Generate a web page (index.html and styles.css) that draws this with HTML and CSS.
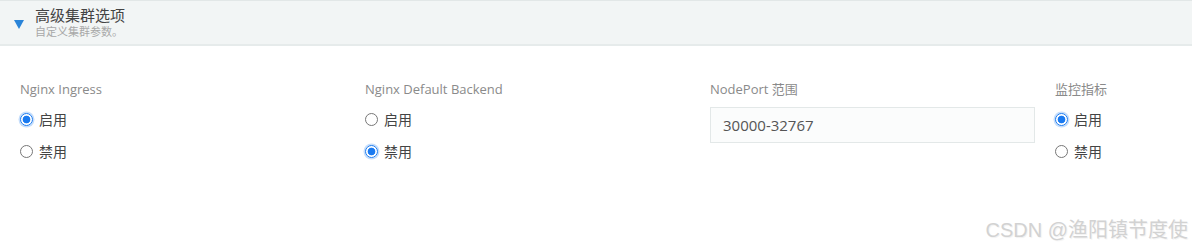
FILE: index.html
```html
<!DOCTYPE html>
<html>
<head>
  <title>高级集群选项</title>
  <link rel="stylesheet" href="styles.css">
</head>
<body>

<!-- Section header -->
<div class="section-head">
  <span class="caret"></span>
  <div>
    <div class="section-title">高级集群选项</div>
    <div class="section-desc">自定义集群参数。</div>
  </div>
</div>

<!-- Option columns -->
<div class="options">
  <div class="field">
    <div class="label">Nginx Ingress</div>
    <div class="radio checked"><span class="dot"></span>启用</div>
    <div class="radio"><span class="dot"></span>禁用</div>
  </div>

  <div class="field">
    <div class="label">Nginx Default Backend</div>
    <div class="radio"><span class="dot"></span>启用</div>
    <div class="radio checked"><span class="dot"></span>禁用</div>
  </div>

  <div class="field">
    <div class="label">NodePort 范围</div>
    <input class="text-input" type="text" value="30000-32767">
  </div>

  <div class="field">
    <div class="label">监控指标</div>
    <div class="radio checked"><span class="dot"></span>启用</div>
    <div class="radio"><span class="dot"></span>禁用</div>
  </div>
</div>

<div class="watermark">CSDN @渔阳镇节度使</div>

</body>
</html>
```

FILE: styles.css
```css
body {
  margin: 0;
  font-family: 'Open Sans', 'Noto Sans CJK SC', sans-serif;
  background-color: #FFF;
  color: #444;
  position: relative;
  height: 249px;
  overflow: hidden;
}
.section-head {
  display: flex;
  align-items: center;
  height: 46px;
  padding-left: 14px;
  background-color: #F2F5F5;
  border-top: 1px solid #E2E7E7;
  border-bottom: 2px solid #E6EBEB;
  box-sizing: border-box;
}
.caret {
  width: 0;
  height: 0;
  border-left: 5.5px solid transparent;
  border-right: 5.5px solid transparent;
  border-top: 9px solid #2A84D8;
  margin-right: 11px;
  margin-top: 3px;
}
.section-title {
  font-size: 15px;
  line-height: 19px;
  color: #444;
}
.section-desc {
  font-size: 11px;
  line-height: 14px;
  color: #A8A8A8;
}
.options {
  display: grid;
  grid-template-columns: 345px 345px 345px 1fr;
  padding: 33px 0 0 20px;
}
.label {
  font-size: 13px;
  line-height: 20px;
  color: #8A8A8A;
  margin-bottom: 4px;
}
.radio {
  display: flex;
  align-items: center;
  height: 32px;
  font-size: 14px;
  color: #444;
}
.dot {
  width: 11px;
  height: 11px;
  border: 1px solid #777;
  border-radius: 50%;
  margin-right: 6px;
  box-sizing: content-box;
  background-color: #FFF;
}
.radio.checked .dot {
  border-color: #1A7AF0;
  background: radial-gradient(circle, #1A7AF0 0, #1A7AF0 3.5px, #FFF 4.2px);
  box-shadow: 0 0 0 1.5px rgba(26, 122, 240, 0.25);
}
.text-input {
  width: 325px;
  height: 36px;
  margin-top: 4px;
  padding: 0 12px;
  box-sizing: border-box;
  border: 1px solid #E3E8E8;
  background-color: #FBFCFC;
  font-family: 'Open Sans', sans-serif;
  font-size: 15px;
  color: #555;
  outline: none;
}
.watermark {
  position: absolute;
  right: 4px;
  bottom: 6px;
  font-family: 'Liberation Sans', 'Noto Sans CJK SC', sans-serif;
  font-size: 20px;
  color: #D2D2D2;
  text-shadow: 1px 1px 1px rgba(0, 0, 0, 0.06);
}
```
